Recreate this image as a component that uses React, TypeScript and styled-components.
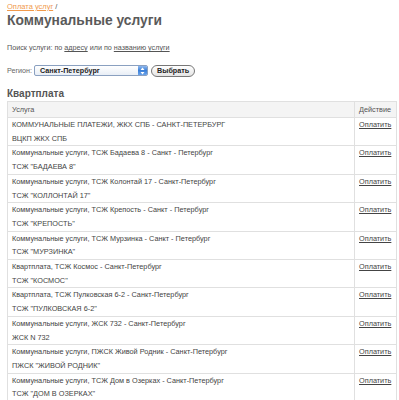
import React from 'react'
import styled, { createGlobalStyle } from 'styled-components'

const GlobalStyle = createGlobalStyle`
  body {
    margin: 0;
    padding: 0 2px 0 7px;
    background: #ffffff;
    font-family: "Liberation Sans", Arial, sans-serif;
    color: #555555;
  }
`

const Page = styled.div`
  display: flex;
  flex-direction: column;
`

const Crumbs = styled.div`
  font-size: 7.5px;
  line-height: 10px;
  margin-top: 2px;
  color: #555;
`

const CrumbLink = styled.a`
  color: #f19a4c;
  text-decoration: underline;
`

const Title = styled.h1`
  margin: 1px 0 0;
  font-size: 13.8px;
  line-height: 16px;
  font-weight: bold;
  color: #5a5a5a;
`

const SearchLine = styled.div`
  margin-top: 14px;
  font-size: 7.2px;
  line-height: 10px;
  color: #555;
`

const PlainLink = styled.a`
  color: #555;
  text-decoration: underline;
`

const RegionForm = styled.div`
  display: flex;
  align-items: center;
  gap: 2px;
  margin-top: 11px;
  height: 13px;
  font-size: 7.2px;
`

const Label = styled.span`
  color: #666;
`

const Select = styled.div`
  position: relative;
  display: flex;
  align-items: center;
  width: 114px;
  height: 11px;
  box-sizing: border-box;
  border: 1px solid #8aa0c0;
  border-radius: 2px;
  background: linear-gradient(#ffffff, #e8eef6);
  padding-left: 5px;
  font-size: 7.2px;
  font-weight: bold;
  color: #222;
`

const SelectArrow = styled.div`
  position: absolute;
  right: 0;
  top: 0;
  bottom: 0;
  width: 9px;
  border-radius: 0 1px 1px 0;
  background: linear-gradient(#8fb8ee, #3a7fd8 50%, #6aa3ea);
  display: flex;
  align-items: center;
  justify-content: center;
`

const Button = styled.button`
  height: 12px;
  padding: 0 5px;
  margin-left: 1px;
  border: 1px solid #777;
  border-radius: 6px;
  background: linear-gradient(#ffffff, #e4e4e4);
  font-family: "Liberation Sans", Arial, sans-serif;
  font-size: 7.2px;
  font-weight: bold;
  color: #222;
  line-height: 10px;
`

const Section = styled.h2`
  margin: 11px 0 0;
  font-size: 10px;
  line-height: 12px;
  font-weight: bold;
  color: #555;
`

const Table = styled.table`
  margin-top: 1px;
  width: 390px;
  border-collapse: collapse;
  font-size: 7.3px;
  color: #444;
`

const Th = styled.th<{ $narrow?: boolean }>`
  text-align: left;
  font-weight: normal;
  background: #f4f4f4;
  border: 1px solid #e0e0e0;
  height: 15px;
  padding: 0 4px;
  width: ${({ $narrow }) => ($narrow ? '33px' : 'auto')};
  color: #555;
`

const Td = styled.td`
  border: 1px solid #e0e0e0;
  padding: 0 4px;
  vertical-align: top;
  line-height: 13.7px;
`

const Pay = styled.a`
  color: #444;
  text-decoration: underline;
`

const rows: [string, string][] = [
  ['КОММУНАЛЬНЫЕ ПЛАТЕЖИ, ЖКХ СПБ - САНКТ-ПЕТЕРБУРГ', 'ВЦКП ЖКХ СПБ'],
  ['Коммунальные услуги, ТСЖ Бадаева 8 - Санкт - Петербург', 'ТСЖ "БАДАЕВА 8"'],
  ['Коммунальные услуги, ТСЖ Колонтай 17 - Санкт-Петербург', 'ТСЖ "КОЛЛОНТАЙ 17"'],
  ['Коммунальные услуги, ТСЖ Крепость - Санкт - Петербург', 'ТСЖ "КРЕПОСТЬ"'],
  ['Коммунальные услуги, ТСЖ Мурзинка - Санкт - Петербург', 'ТСЖ "МУРЗИНКА"'],
  ['Квартплата, ТСЖ Космос - Санкт-Петербург', 'ТСЖ "КОСМОС"'],
  ['Квартплата, ТСЖ Пулковская 6-2 - Санкт-Петербург', 'ТСЖ "ПУЛКОВСКАЯ 6-2"'],
  ['Коммунальные услуги, ЖСК 732 - Санкт-Петербург', 'ЖСК N 732'],
  ['Коммунальные услуги, ПЖСК Живой Родник - Санкт-Петербург', 'ПЖСК "ЖИВОЙ РОДНИК"'],
  ['Коммунальные услуги, ТСЖ Дом в Озерках - Санкт-Петербург', 'ТСЖ "ДОМ В ОЗЕРКАХ"'],
]

export default function App() {
  return (
    <Page>
      <GlobalStyle />
      <Crumbs>
        <CrumbLink href="#">Оплата услуг</CrumbLink> /
      </Crumbs>
      <Title>Коммунальные услуги</Title>
      <SearchLine>
        Поиск услуги: по <PlainLink href="#">адресу</PlainLink> или по{' '}
        <PlainLink href="#">названию услуги</PlainLink>
      </SearchLine>
      <RegionForm>
        <Label>Регион:</Label>
        <Select>
          Санкт-Петербург
          <SelectArrow>
            <svg width="5" height="8" viewBox="0 0 5 8">
              <path d="M2.5 0.5 L4.5 3 H0.5 Z M2.5 7.5 L4.5 5 H0.5 Z" fill="#fff" />
            </svg>
          </SelectArrow>
        </Select>
        <Button>Выбрать</Button>
      </RegionForm>
      <Section>Квартплата</Section>
      <Table>
        <thead>
          <tr>
            <Th>Услуга</Th>
            <Th $narrow>Действие</Th>
          </tr>
        </thead>
        <tbody>
          {rows.map(([name, org]) => (
            <tr key={name}>
              <Td>
                {name}
                <br />
                {org}
              </Td>
              <Td>
                <Pay href="#">Оплатить</Pay>
              </Td>
            </tr>
          ))}
        </tbody>
      </Table>
    </Page>
  )
}
